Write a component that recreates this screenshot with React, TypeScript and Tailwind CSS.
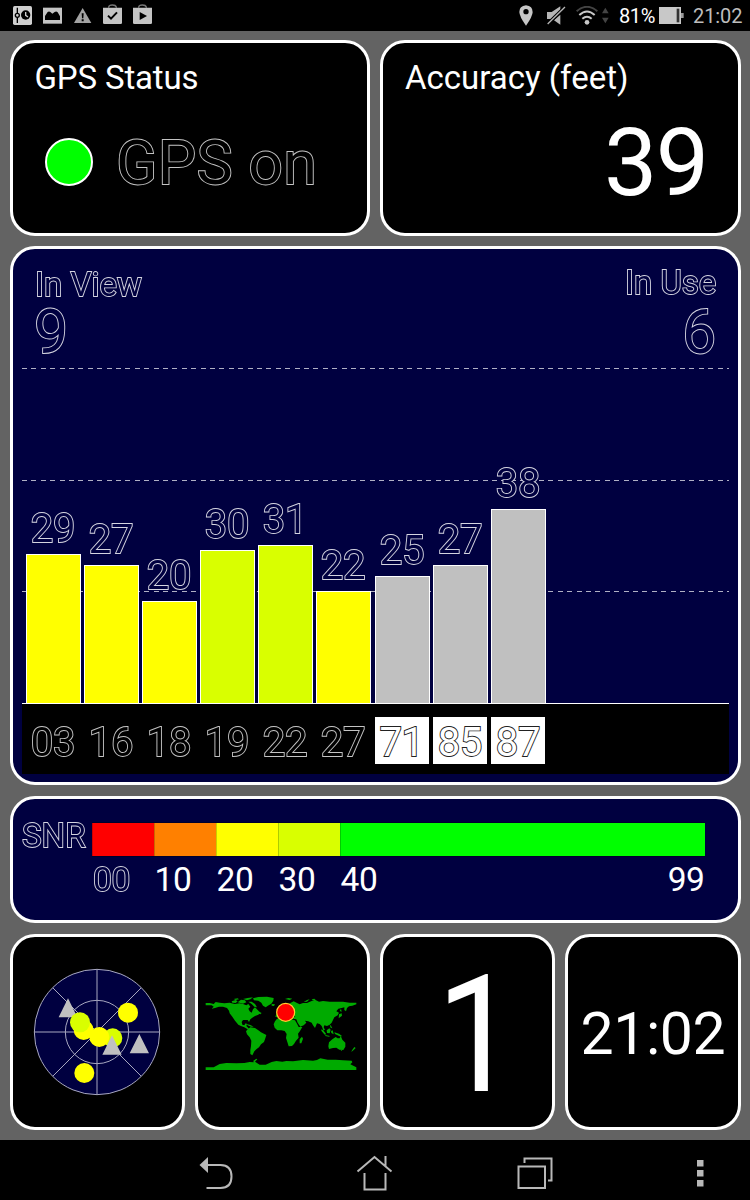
import type { ReactNode } from "react";

type Satellite = {
  id: string;
  snr: number;
  height: number;
  color: string;
  glonass?: boolean;
};

const satellites: Satellite[] = [
  { id: "03", snr: 29, height: 149, color: "bg-[#ffff00]" },
  { id: "16", snr: 27, height: 138, color: "bg-[#ffff00]" },
  { id: "18", snr: 20, height: 102, color: "bg-[#ffff00]" },
  { id: "19", snr: 30, height: 153, color: "bg-[#d9ff00]" },
  { id: "22", snr: 31, height: 158, color: "bg-[#d9ff00]" },
  { id: "27", snr: 22, height: 112, color: "bg-[#ffff00]" },
  { id: "71", snr: 25, height: 127, color: "bg-[#c0c0c0]", glonass: true },
  { id: "85", snr: 27, height: 138, color: "bg-[#c0c0c0]", glonass: true },
  { id: "87", snr: 38, height: 194, color: "bg-[#c0c0c0]", glonass: true },
];

const snrScale = [
  { label: "00", bar: "w-[62px] bg-[#ff0000]", outlined: true },
  { label: "10", bar: "w-[62px] bg-[#ff8000]" },
  { label: "20", bar: "w-[62px] bg-[#ffff00]" },
  { label: "30", bar: "w-[62px] bg-[#d9ff00]" },
  { label: "40", bar: "flex-1 bg-[#00ff00]" },
];

// the fill is painted over the stroke so that overlapping contours stay hidden
const outlineNavy =
  "text-[#000040] [paint-order:stroke] [-webkit-text-stroke:1.8px_#d4d4e0] will-change-transform";
const outlineBlack =
  "text-black [paint-order:stroke] [-webkit-text-stroke:1.8px_#c4c4c4] will-change-transform";
const outlineWhite = "text-white [paint-order:stroke] [-webkit-text-stroke:1.8px_#222]";

const Card = ({ className = "", children }: { className?: string; children?: ReactNode }) => (
  <section className={`rounded-[25px] border-[3px] border-white ${className}`}>{children}</section>
);

const StatusBar = () => (
  <header className="flex h-[31px] items-center justify-between bg-black pl-[13px] pr-[8px]">
    <div className="flex items-center gap-[11px]">
      {/* settings / clock */}
      <svg width="19" height="19" viewBox="0 0 57 57">
        <rect width="57" height="57" rx="5" fill="#cfcfcf" />
        <path d="M13 5v46" stroke="#000" strokeWidth="4" />
        <circle cx="13" cy="28" r="6" fill="#cfcfcf" stroke="#000" strokeWidth="4" />
        <circle cx="38" cy="27" r="14" fill="#000" />
        <path d="M38 18v10l7 5" stroke="#cfcfcf" strokeWidth="4" fill="none" />
      </svg>
      {/* screenshot */}
      <svg width="19" height="19" viewBox="0 0 57 57">
        <rect y="5" width="57" height="48" fill="#c4c4c4" />
        <path d="M6 42V30l8-12q4-3 8 0l6 5 7-5q5-3 9 1l7 12v11z" fill="#000" />
      </svg>
      <svg width="19" height="19" viewBox="0 0 57 57">
        <path d="M29 6L55 51H3z" fill="#a3a3a3" />
        <path d="M26 22h6l-1 15h-4zM26 40h6v6h-6z" fill="#000" />
      </svg>
      {/* play store bags */}
      <svg className="-mt-[2px]" width="19" height="21" viewBox="0 0 57 63">
        <path d="M17 11V9Q18 3 28 3t12 6v2" fill="none" stroke="#777" strokeWidth="4" />
        <path d="M0 11h57v45q0 4-4 4H4q-4 0-4-4z" fill="#c4c4c4" />
        <path d="M15 35l9 9 18-19" fill="none" stroke="#000" strokeWidth="6" />
      </svg>
      <svg className="-mt-[2px]" width="19" height="21" viewBox="0 0 57 63">
        <path d="M17 11V9Q18 3 28 3t12 6v2" fill="none" stroke="#777" strokeWidth="4" />
        <path d="M0 11h57v45q0 4-4 4H4q-4 0-4-4z" fill="#c4c4c4" />
        <path d="M20 24l22 12-22 12z" fill="#000" />
      </svg>
    </div>

    <div className="flex items-center">
      <svg className="mr-[13px]" width="14" height="21" viewBox="0 0 42 63">
        <path d="M21 1Q1 3 1 21q0 13 20 41Q41 34 41 21 41 3 21 1z" fill="#c6c6c6" />
        <circle cx="21" cy="20" r="8" fill="#000" />
      </svg>
      {/* muted speaker */}
      <svg className="mr-[10px]" width="20" height="19" viewBox="0 0 60 57">
        <path d="M3 18h14L43 1v12L17 39H3zM43 26v30L24 43z" fill="#b5b5b5" />
        <path d="M57 3L5 54" stroke="#000" strokeWidth="10" />
        <path d="M57 3L5 54" stroke="#b5b5b5" strokeWidth="4" />
      </svg>
      <svg className="mr-[4px]" width="22" height="19" viewBox="0 0 66 57" fill="none" strokeWidth="6">
        <path d="M2 16Q33-11 64 16" stroke="#444" />
        <path d="M10 27Q33 6 56 27M19 38Q33 26 47 38" stroke="#c8c8c8" />
        <circle cx="33" cy="49" r="7" fill="#c8c8c8" />
      </svg>
      <svg className="mr-[10px]" width="7" height="17" viewBox="0 0 21 51" fill="#444">
        <path d="M10 2l10 17H0zM10 49L0 32h20z" />
      </svg>
      <span className="mr-[3px] w-[37px] text-[20px] leading-[30px] tracking-[-0.4px] text-white">81%</span>
      <svg className="mr-[9px]" width="25" height="17" viewBox="0 0 75 51">
        <rect width="66" height="51" fill="#c8c8c8" />
        <rect x="66" y="18" width="8" height="15" fill="#999" />
        <rect x="53" y="5" width="8" height="41" fill="#333" />
      </svg>
      <span className="w-[49px] text-[20px] leading-[30px] tracking-[-0.1px] text-[#bdbdbd]">21:02</span>
    </div>
  </header>
);

const SatelliteChart = () => (
  <Card className="mt-[10px] h-[539px] bg-[#000040] px-[9px]">
    <div className="flex h-[120px] justify-between px-[12px] pt-[14px]">
      <div>
        <div className={`pl-px pt-[2px] text-[33px] leading-[40px] ${outlineNavy}`}>In View</div>
        <div className={`pt-px text-[61px] leading-[52px] ${outlineNavy}`}>9</div>
      </div>
      <div className="text-right">
        <div className={`pb-[2px] text-[33px] leading-[40px] ${outlineNavy}`}>In Use</div>
        <div className={`pt-px text-[61px] leading-[52px] ${outlineNavy}`}>6</div>
      </div>
    </div>

    <div className="relative flex h-[335px] items-end gap-[3.2px] border-b border-white pl-[4px]">
      {/* grid lines sit behind the bars */}
      <div className="absolute inset-x-0 -top-px h-px bg-[repeating-linear-gradient(90deg,#b0b0c4_0_5px,transparent_5px_9.4px)]" />
      <div className="absolute inset-x-0 top-[111px] h-px bg-[repeating-linear-gradient(90deg,#b0b0c4_0_5px,transparent_5px_9.4px)]" />
      <div className="absolute inset-x-0 top-[222px] h-px bg-[repeating-linear-gradient(90deg,#b0b0c4_0_5px,transparent_5px_9.4px)]" />
      {satellites.map((s) => (
        <div key={s.id} className="relative w-[55px]">
          <div className={`pr-px text-center text-[40px] leading-[51px] tracking-[-0.3px] ${outlineNavy}`}>
            {s.snr}
          </div>
          <div
            className={`border border-b-0 border-white ${s.color}`}
            style={{ height: s.height }}
          />
        </div>
      ))}
    </div>

    <div className="flex h-[70px] gap-[4.2px] bg-black pl-[4px] pt-[13px]">
      {satellites.map((s) => (
        <div
          key={s.id}
          className={`h-[47px] w-[54px] text-center text-[40px] leading-[51px] tracking-[-0.3px] ${
            s.glonass ? `bg-white ${outlineWhite}` : outlineBlack
          }`}
        >
          {s.id}
        </div>
      ))}
    </div>
  </Card>
);

const SnrLegend = () => (
  <Card className="mt-[11px] flex h-[127px] bg-[#000040] pl-[9px] pt-[23px]">
    <div className={`w-[70px] text-[33px] leading-[28px] ${outlineNavy}`}>SNR</div>
    <div className="w-[613px]">
      <div className="flex h-[35px] border-y border-black/30">
        {snrScale.map((s) => (
          <div key={s.label} className={`border-l border-black/20 ${s.bar}`} />
        ))}
      </div>
      <div className="flex pt-[2px] text-[33.5px] leading-[42px] tracking-[-0.4px] text-white">
        {snrScale.map((s) => (
          <span key={s.label} className={`w-[62px] pl-px ${s.outlined ? outlineNavy : ""}`}>
            {s.label}
          </span>
        ))}
        <span className="ml-auto">99</span>
      </div>
    </div>
  </Card>
);

const SkyView = () => (
  <svg width="128" height="128" viewBox="99 129 384 384">
    <circle cx="291" cy="321" r="188" fill="#000040" />
    <g fill="none" stroke="#a8a8c0" strokeWidth="3">
      <circle cx="291" cy="321" r="188" />
      <circle cx="291" cy="321" r="95" />
      <path d="M291 133v376M103 321h376M158 188l266 266M424 188L158 454" />
    </g>
    <path d="M204 220l28 57h-56z" fill="#c0c0c0" />
    <circle cx="384" cy="263" r="30" fill="#ffff00" />
    <circle cx="251" cy="315" r="30" fill="#ffff00" />
    <circle cx="240" cy="292" r="30" fill="#d9ff00" />
    <circle cx="338" cy="339" r="29" fill="#d9ff00" />
    <circle cx="298" cy="336" r="30" fill="#ffff00" />
    <circle cx="253" cy="444" r="30" fill="#ffff00" />
    <path d="M336 331l29 58h-58zM418 327l29 58h-58z" fill="#c0c0c0" />
  </svg>
);

const WorldMap = () => (
  <svg className="mr-[2px]" width="152" height="80" viewBox="46 36 456 240">
    <g fill="#00aa00">
      {/* north america */}
      <path d="M48 69h12l12 3 6-6 12 2 14 2 16-2 15 4 15-2 10 2 10 4 6-4 6 8-6 6 4 8 6 4 4-10 6-6 8 8 8 8-6 6-10 4-6 4-8 6-4 8-4-6-14 0-4 6 2 8 6 2 4-6 4 2-2 6 6 6 4 6-6-2-10-6-10-4-8-4-10-12-8-12-8-10-2-8-6-8-12-4-12 0-12 4-10 2 6-6-6-4H48z" />
      <path d="M126 64l12-4 6 4-6 5-10-1zM144 67l10-8 12 2 4 6-10 4zM160 57l14-3 16-2-8 6-10 3zM176 65l10 0 10 7 6 10-8-2-8-8zM132 57l12-2 4 3-10 2zM170 132l12 3 10 5-8 0-10-4zM208 95l8 4-4 4-7-3z" />
      {/* greenland and iceland */}
      <path d="M190 55l16-4 26-1 20 4-1 8-6 9-8 5-9 6-8-5-5-9-9-6-13-1zM246 72l10 1-3 5-7-1z" />
      {/* south america */}
      <path d="M174 148l8-6 14 2 10 7 8 6 16 8-3 10-4 11-9 7-6 9-8 6-6 6-4 8-2 4-6-4 0-12 2-12 1-16-5-10-8-9-3-9z" />
      {/* africa */}
      <path d="M256 124l6-8 12-2 14-2 12 5 16 4 6 10 5 10 11 0-7 12-6 8 2 12-8 9-6 10-6 6-10 1-4-13-4-12 2-12-6-9-10-2-12 0-8-8-3-10zM337 170l3 6-5 14-5 0 0-12z" />
      {/* europe and asia */}
      <path d="M262 97l14-6 14-10 12-12 10-5 10 5 8 4 10-4 12 0 14-6 10-4 12 6 12-2 20 2h20l20 0 20 3h20v5l-12 4-10 2-6 5-3 10-5-4v-8l-8 2-10 2-6 8 8 4-4 8-10 6-4 8-4 8-6 6-8 4-8-2-2 6 4 8-5 1-5-13-6-6-8-2-6 14-6-8-4-8-10-4-10-2 4 6-8 8-10 4-8-12-4-10-10-2 6-8-10-2-8 4-10-4h-20l-6 6-5-2z" />
      <path d="M286 57l10-3 12 2-8 4zM342 66l10-6 8-2-8 7zM366 58l8-2 4 3-8 2zM448 103l8-3 1 7-10 8zM450 93l4-7 2 9zM263 84l7-5 3 12-8 2z" />
      {/* south east asia */}
      <path d="M395 148l6 3 9 12-5 1-10-12zM407 165l14 3-3 2-11-2zM411 151l8-6 4 4-3 11-8-1zM424 153l5-2 3 12-7-4zM420 134l4 3 4 8-5-2zM434 157l14 4 10 8-8 0-14-7z" />
      {/* australia and new zealand */}
      <path d="M418 187l10-9 10-7 6 4 6 0 3-8 5 12 9 9v12l-6 10-12-1-9-6-10 1-12 3-2-8zM452 209l6 0-2 4zM494 201l4 3-6 6-7 6 2-5z" />
      {/* antarctica */}
      <path d="M48 262l24 0 18-10 20-3 30 1 24-1 16-3 12 1-1-5 9-6 3 2-7 7 14 9 18 0 18-8 14-3 18 2 12-2 20 1 30-4 30 2 12-2 10-5 22 4 24 0 22 2 26 1 2 5-6 6 18 9v8H48z" />
    </g>
    <circle cx="288" cy="97" r="27" fill="#ff0000" stroke="#ffcf30" strokeWidth="3.5" />
  </svg>
);

const NavBar = () => (
  <footer className="h-[60px] bg-black">
    <svg width="750" height="60" viewBox="0 0 750 60" fill="none" stroke="#b8b8b8" strokeWidth="2">
      <path d="M206 25h14.500q11 0 11 11.500T220.500 48H206.500" />
      <path d="M199.500 25l8.500-8v16z" fill="#b8b8b8" stroke="none" />
      <path d="M357.500 31.500l17-14.500 17 14.500M385.500 26V16M364.500 33v16.500h21V33" />
      <path d="M518.500 26.500H545v21.500h-26.500zM524.500 23v-4.500h27v22H548" />
      <path d="M697 20h6.500v6.500H697zM697 30h6.500v6.500H697zM697 40h6.500v6.500H697z" fill="#b8b8b8" stroke="none" />
    </svg>
  </footer>
);

const App = () => {
  return (
    <div className="h-[1200px] w-[750px] overflow-hidden bg-[#636363] font-['Roboto',sans-serif]">
      <StatusBar />

      <main className="h-[1109px] px-[9.5px] pt-[9px]">
        <div className="grid grid-cols-2 gap-[10px]">
          <Card className="h-[196px] bg-black pl-[22px] pt-[15px] text-white">
            <h2 className="text-[33px] leading-[40px] tracking-[-0.15px]">GPS Status</h2>
            <div className="flex items-center pl-[10px] pt-[28px]">
              <span className="size-[48px] rounded-full border-2 border-white bg-[#00ff00]" />
              <span className={`ml-[23px] pt-[2px] text-[61px] leading-[70px] tracking-[0.2px] ${outlineBlack}`}>
                GPS on
              </span>
            </div>
          </Card>
          <Card className="h-[196px] bg-black pl-[22px] pr-[30px] pt-[15px] text-white">
            <h2 className="text-[33px] leading-[40px]">Accuracy (feet)</h2>
            <div className="pt-[9px] text-right text-[95px] leading-[112px] tracking-[-1.7px]">39</div>
          </Card>
        </div>

        <SatelliteChart />
        <SnrLegend />

        <div className="mt-[11px] grid grid-cols-4 gap-[10px] text-white">
          <Card className="flex h-[196px] items-center justify-center bg-black">
            <SkyView />
          </Card>
          <Card className="flex h-[196px] items-center justify-center bg-black">
            <WorldMap />
          </Card>
          <Card className="flex h-[196px] items-center justify-center bg-black pl-[19px] pt-[6px] text-[164px] leading-[184px]">
            <span className="scale-x-[0.88]">1</span>
          </Card>
          <Card className="flex h-[196px] items-center justify-center bg-black pt-[3px] text-[59px] leading-[70px] tracking-[-0.4px]">
            21:02
          </Card>
        </div>
      </main>

      <NavBar />
    </div>
  );
};

export default App;
